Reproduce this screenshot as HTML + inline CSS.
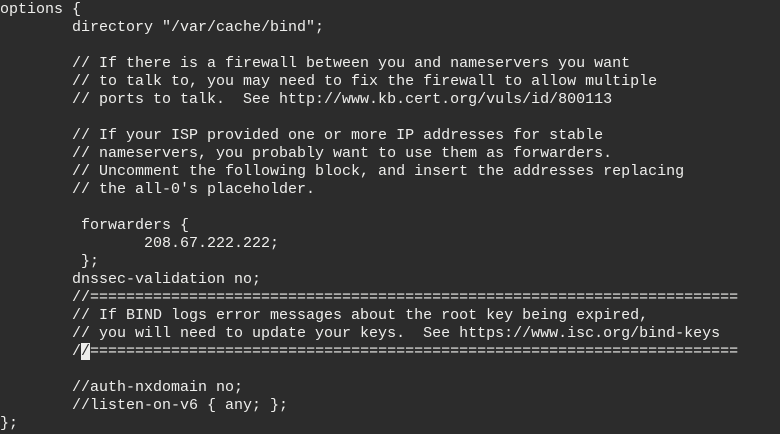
<!DOCTYPE html>
<html><head><meta charset="utf-8"><style>
html,body{margin:0;padding:0;background:#2c2c2c;}
body{width:780px;height:434px;overflow:hidden;}
pre{margin:0;padding:0;position:relative;top:1px;font-family:"Liberation Mono",monospace;font-size:15px;line-height:18px;color:#eeeeec;white-space:pre;}
.cur{background:#eeeeec;color:#2c2c2c;}
</style></head><body><pre>options {
        directory "/var/cache/bind";

        // If there is a firewall between you and nameservers you want
        // to talk to, you may need to fix the firewall to allow multiple
        // ports to talk.  See http://www.kb.cert.org/vuls/id/800113

        // If your ISP provided one or more IP addresses for stable
        // nameservers, you probably want to use them as forwarders.
        // Uncomment the following block, and insert the addresses replacing
        // the all-0's placeholder.

         forwarders {
                208.67.222.222;
         };
        dnssec-validation no;
        //========================================================================
        // If BIND logs error messages about the root key being expired,
        // you will need to update your keys.  See https://www.isc.org/bind-keys
        /<span class="cur">/</span>========================================================================

        //auth-nxdomain no;
        //listen-on-v6 { any; };
};</pre></body></html>
